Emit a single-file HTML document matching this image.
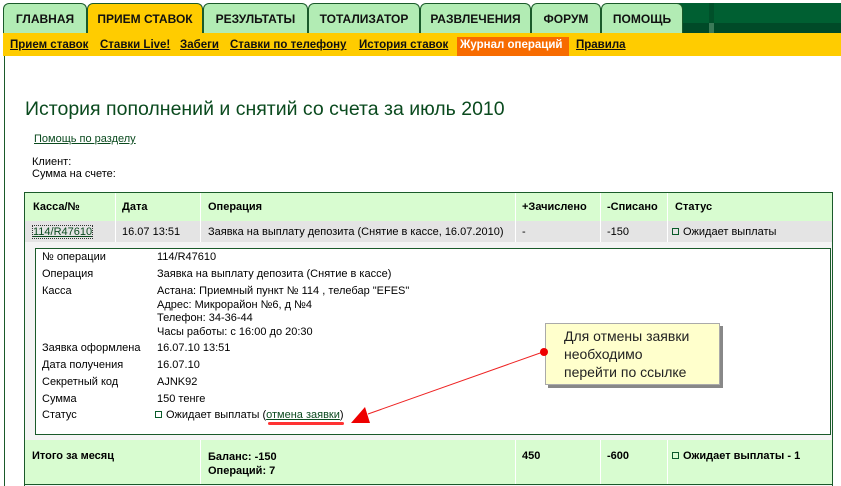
<!DOCTYPE html>
<html><head><meta charset="utf-8"><style>
*{margin:0;padding:0;box-sizing:border-box}
body{width:841px;height:486px;background:#fff;font-family:"Liberation Sans",sans-serif;font-size:11px;color:#000;position:relative;overflow:hidden}
.a{position:absolute;white-space:nowrap}
.tab{position:absolute;top:3px;height:30px;background:#b2ecb4;border:1px solid #1a5a2a;border-bottom:none;border-radius:6px 6px 0 0;font-weight:bold;font-size:12px;text-align:center;line-height:30px;color:#111}
.sub{position:absolute;top:39px;font-weight:bold;font-size:11.5px;text-decoration:underline;color:#111}
.g{color:#0a4a1e}
.box{display:inline-block;width:7px;height:7px;border:1px solid #0a5a2a;margin-right:4px;vertical-align:0}
</style></head><body>
<div class="a" style="left:675px;top:3px;width:166px;height:30px;background:#005f32"></div>
<div class="a" style="left:675px;top:23px;width:166px;height:10px;background:#004a28"></div>
<div class="a" style="left:709px;top:3px;width:5px;height:30px;background:#00502a"></div>
<div class="a" style="left:709px;top:23px;width:5px;height:10px;background:#3a7a58"></div>
<div class="tab" style="left:3px;width:84px">ГЛАВНАЯ</div>
<div class="tab" style="left:87px;width:116px;background:#ffcc00;height:31px">ПРИЕМ СТАВОК</div>
<div class="tab" style="left:203px;width:105px">РЕЗУЛЬТАТЫ</div>
<div class="tab" style="left:308px;width:112px">ТОТАЛИЗАТОР</div>
<div class="tab" style="left:420px;width:111px">РАЗВЛЕЧЕНИЯ</div>
<div class="tab" style="left:531px;width:70px">ФОРУМ</div>
<div class="tab" style="left:601px;width:82px">ПОМОЩЬ</div>
<div class="a" style="left:3px;top:33px;width:838px;height:23px;background:#ffcc00"></div>
<div class="a" style="left:457px;top:37px;width:112px;height:19px;background:#f76b00"></div>
<span class="sub" style="left:10px">Прием ставок</span>
<span class="sub" style="left:100px">Ставки Live!</span>
<span class="sub" style="left:180px">Забеги</span>
<span class="sub" style="left:230px">Ставки по телефону</span>
<span class="sub" style="left:359px">История ставок</span>
<span class="sub" style="left:460px;color:#fff;text-decoration:none">Журнал операций</span>
<span class="sub" style="left:576px">Правила</span>
<div class="a" style="left:4px;top:56px;width:1px;height:430px;background:#1a5a2a"></div>
<div class="a g" style="left:25px;top:98px;font-size:19.5px">История пополнений и снятий со счета за июль 2010</div>
<div class="a g" style="left:34px;top:133px;text-decoration:underline">Помощь по разделу</div>
<div class="a" style="left:32px;top:156px">Клиент:</div>
<div class="a" style="left:32px;top:168px">Сумма на счете:</div>
<div class="a" style="left:24px;top:192px;width:809px;height:294px;border:1px solid #1a5a2a;border-bottom:none;background:#f4f4f4"></div>
<div class="a" style="left:25px;top:193px;width:807px;height:28px;background:#d8fcd0"></div>
<div class="a" style="left:25px;top:221px;width:807px;height:21px;background:#e4e4e4"></div>
<div class="a" style="left:25px;top:440px;width:807px;height:44px;background:#d8fcd0"></div>
<div class="a" style="left:25px;top:484px;width:807px;height:1px;background:#1a5a2a"></div>
<div class="a" style="left:115px;top:193px;width:1px;height:49px;background:#fff"></div>
<div class="a" style="left:200px;top:193px;width:1px;height:49px;background:#fff"></div>
<div class="a" style="left:515px;top:193px;width:1px;height:49px;background:#fff"></div>
<div class="a" style="left:600px;top:193px;width:1px;height:49px;background:#fff"></div>
<div class="a" style="left:667px;top:193px;width:1px;height:49px;background:#fff"></div>
<div class="a" style="left:200px;top:440px;width:1px;height:44px;background:#fff"></div>
<div class="a" style="left:515px;top:440px;width:1px;height:44px;background:#fff"></div>
<div class="a" style="left:600px;top:440px;width:1px;height:44px;background:#fff"></div>
<div class="a" style="left:667px;top:440px;width:1px;height:44px;background:#fff"></div>
<b class="a" style="left:33px;top:201px">Касса/№</b>
<b class="a" style="left:122px;top:201px">Дата</b>
<b class="a" style="left:208px;top:201px">Операция</b>
<b class="a" style="left:522px;top:201px">+Зачислено</b>
<b class="a" style="left:607px;top:201px">-Списано</b>
<b class="a" style="left:675px;top:201px">Статус</b>
<span class="a g" style="left:33px;top:226px;text-decoration:underline;outline:1px dotted #333">114/R47610</span>
<span class="a" style="left:122px;top:226px">16.07 13:51</span>
<span class="a" style="left:208px;top:226px">Заявка на выплату депозита (Снятие в кассе, 16.07.2010)</span>
<span class="a" style="left:522px;top:226px">-</span>
<span class="a" style="left:607px;top:226px">-150</span>
<span class="a" style="left:672px;top:226px"><i class="box"></i>Ожидает выплаты</span>
<div class="a" style="left:35px;top:248px;width:796px;height:187px;border:1px solid #1a5a2a;background:#fff"></div>
<span class="a" style="left:42px;top:251px">№ операции</span><span class="a" style="left:157px;top:251px">114/R47610</span>
<span class="a" style="left:42px;top:268px">Операция</span><span class="a" style="left:157px;top:268px">Заявка на выплату депозита (Снятие в кассе)</span>
<span class="a" style="left:42px;top:285px">Касса</span>
<div class="a" style="left:157px;top:285px;line-height:13.5px">Астана: Приемный пункт № 114 , телебар "EFES"<br>Адрес: Микрорайон №6, д №4<br>Телефон: 34-36-44<br>Часы работы: с 16:00 до 20:30</div>
<span class="a" style="left:42px;top:342px">Заявка оформлена</span><span class="a" style="left:157px;top:342px">16.07.10 13:51</span>
<span class="a" style="left:42px;top:359px">Дата получения</span><span class="a" style="left:157px;top:359px">16.07.10</span>
<span class="a" style="left:42px;top:376px">Секретный код</span><span class="a" style="left:157px;top:376px">AJNK92</span>
<span class="a" style="left:42px;top:393px">Сумма</span><span class="a" style="left:157px;top:393px">150 тенге</span>
<span class="a" style="left:42px;top:409px">Статус</span><span class="a" style="left:155px;top:409px"><i class="box"></i>Ожидает выплаты (<span class="g" style="text-decoration:underline">отмена заявки</span>)</span>
<div class="a" style="left:268px;top:422px;width:76px;height:3px;background:#f33;border-radius:2px"></div>
<b class="a" style="left:32px;top:450px">Итого за месяц</b>
<b class="a" style="left:208px;top:450px;line-height:14px">Баланс: -150<br>Операций: 7</b>
<b class="a" style="left:522px;top:450px">450</b>
<b class="a" style="left:607px;top:450px">-600</b>
<b class="a" style="left:672px;top:450px"><i class="box"></i>Ожидает выплаты - 1</b>
<div class="a" style="left:548px;top:326px;width:175px;height:62px;background:#888"></div>
<div class="a" style="left:545px;top:323px;width:175px;height:62px;background:#ffffcc;border:1px solid #aaa;padding:3px 0 0 18px;font-size:14px;line-height:18px;color:#222">Для отмены заявки<br>необходимо<br>перейти по ссылке</div>
<svg class="a" style="left:0;top:0" width="841" height="486"><line x1="543" y1="352" x2="368" y2="414" stroke="#e22" stroke-width="1"/><circle cx="544" cy="352" r="4" fill="#e00"/><polygon points="351,423 370,423 365,407" fill="#e00"/></svg>
</body></html>
